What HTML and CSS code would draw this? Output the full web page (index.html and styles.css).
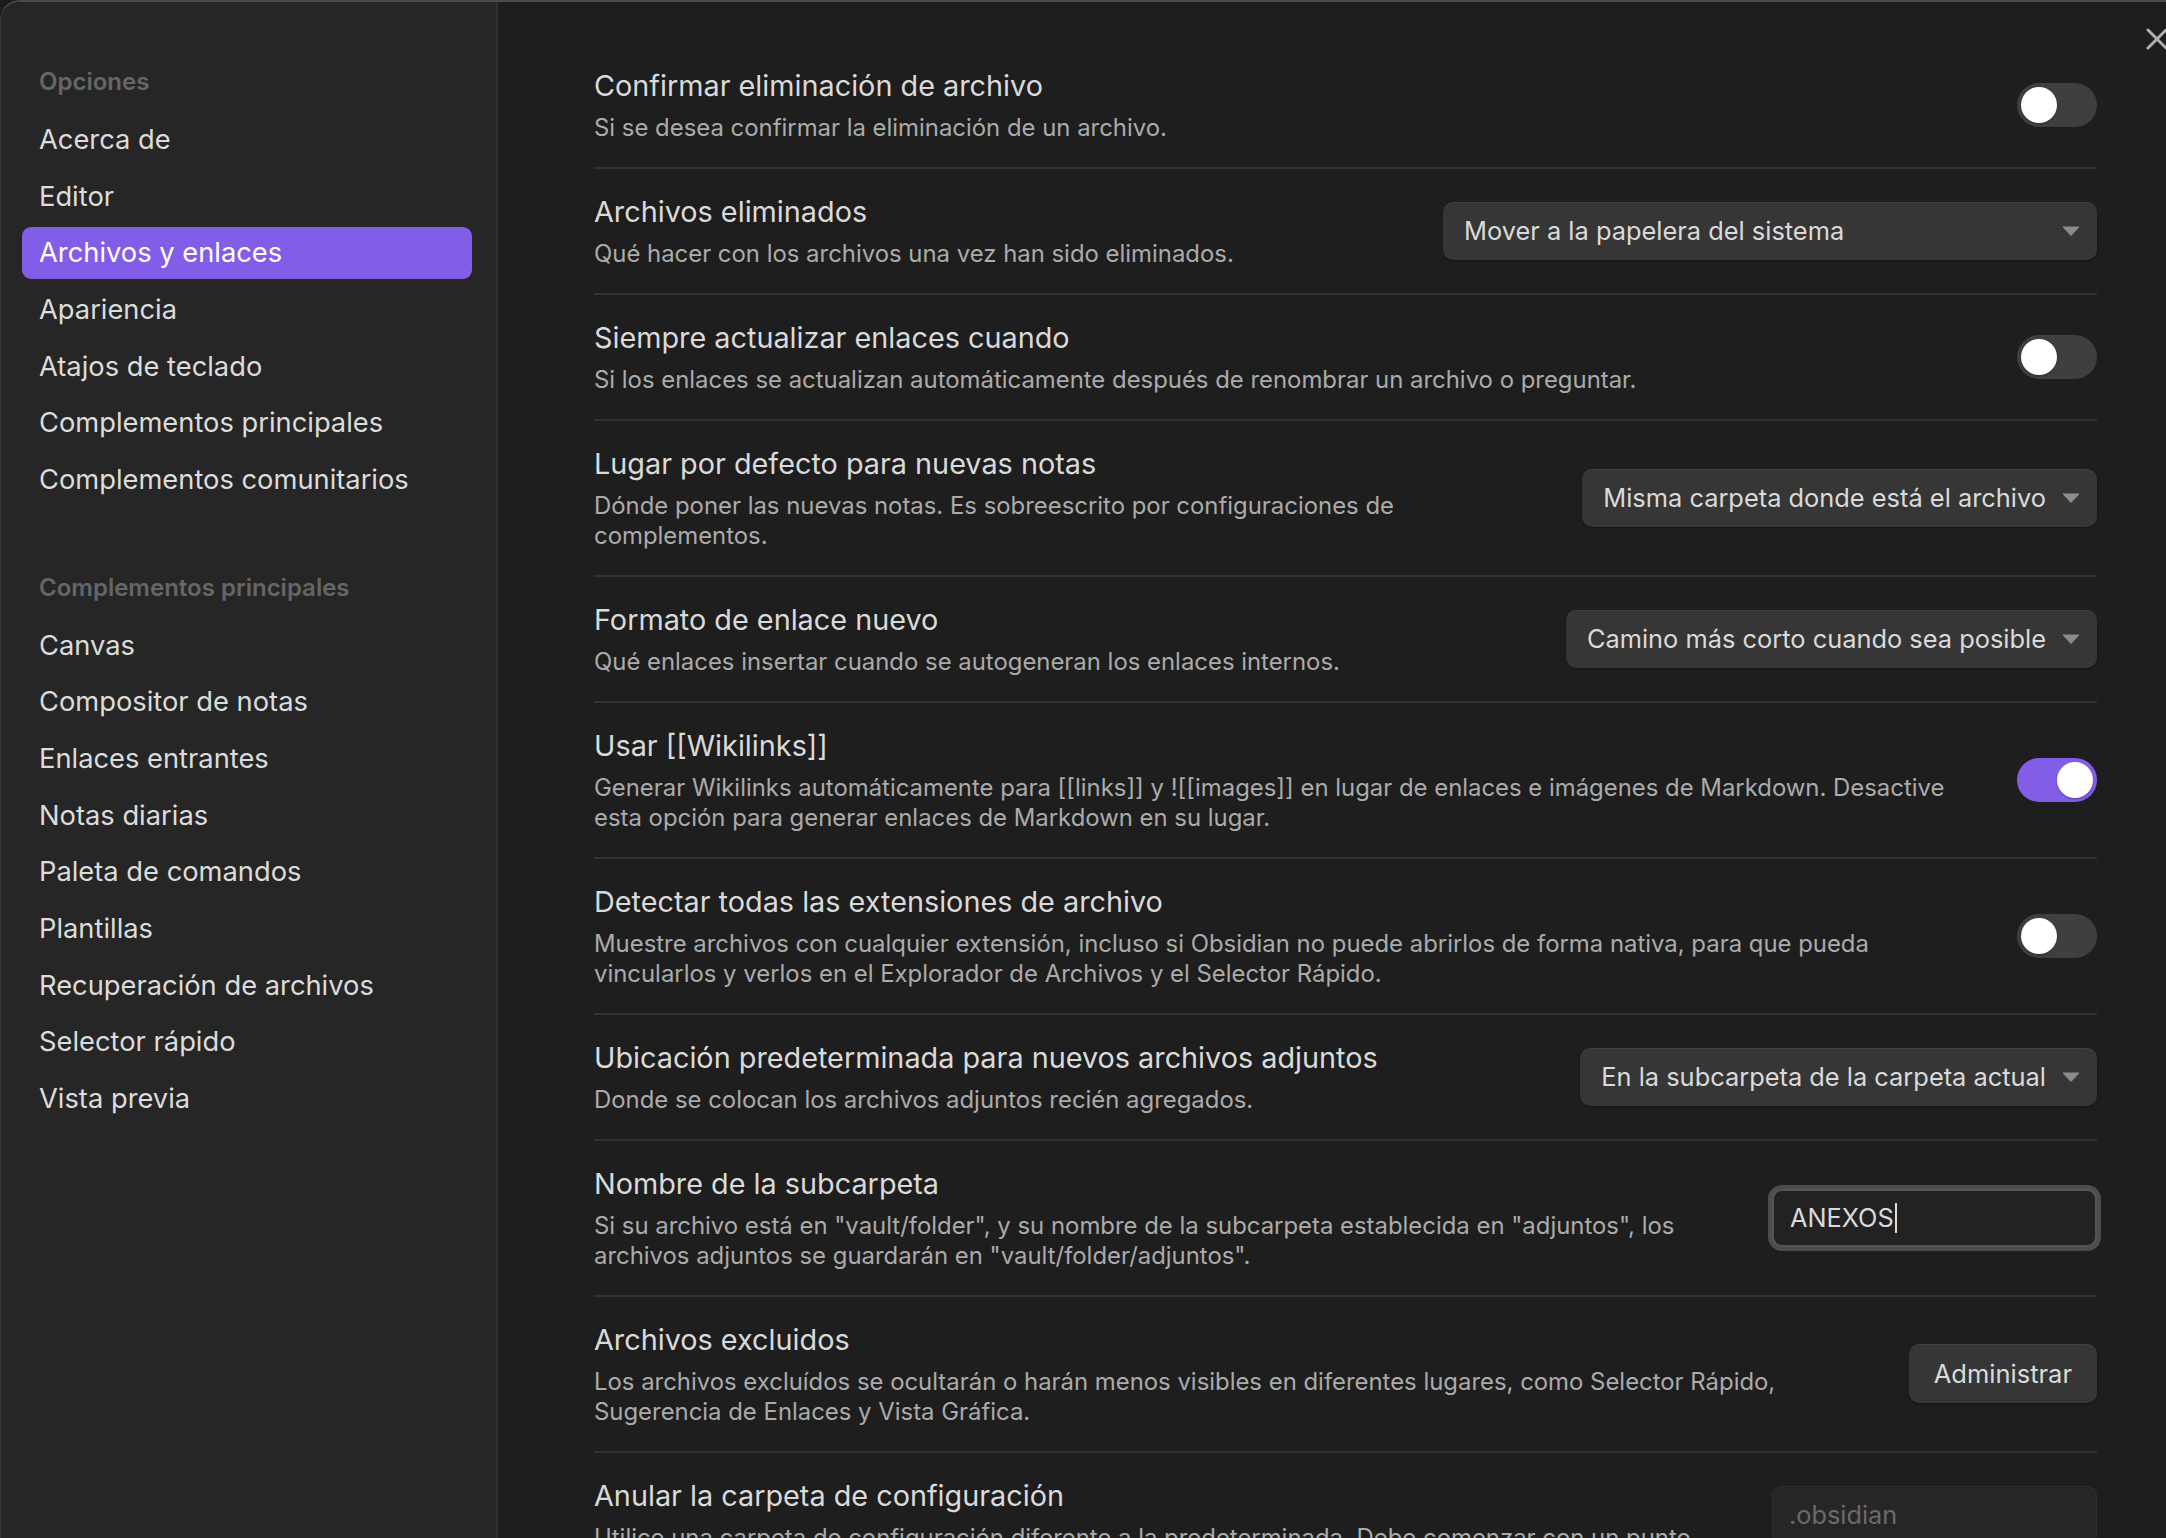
FILE: index.html
```html
<!DOCTYPE html>
<html lang="es">
<head>
<meta charset="utf-8">
<title>Opciones</title>
<link rel="stylesheet" href="styles.css">
</head>
<body>
<div class="modal">
  <button class="close" aria-label="Cerrar">
    <svg viewBox="0 0 22 22" width="22" height="22"><path d="M2 2 L20 20 M20 2 L2 20" stroke="#b0b0b0" stroke-width="3" stroke-linecap="round" fill="none"/></svg>
  </button>
  <nav class="sidebar">
    <div class="group">
      <div class="group-title">Opciones</div>
      <div class="nav-item">Acerca de</div>
      <div class="nav-item">Editor</div>
      <div class="nav-item is-active">Archivos y enlaces</div>
      <div class="nav-item">Apariencia</div>
      <div class="nav-item">Atajos de teclado</div>
      <div class="nav-item">Complementos principales</div>
      <div class="nav-item">Complementos comunitarios</div>
    </div>
    <div class="group">
      <div class="group-title">Complementos principales</div>
      <div class="nav-item">Canvas</div>
      <div class="nav-item">Compositor de notas</div>
      <div class="nav-item">Enlaces entrantes</div>
      <div class="nav-item">Notas diarias</div>
      <div class="nav-item">Paleta de comandos</div>
      <div class="nav-item">Plantillas</div>
      <div class="nav-item">Recuperación de archivos</div>
      <div class="nav-item">Selector rápido</div>
      <div class="nav-item">Vista previa</div>
    </div>
  </nav>
  <main class="content">
    <div class="setting">
      <div class="info">
        <div class="name">Confirmar eliminación de archivo</div>
        <div class="desc">Si se desea confirmar la eliminación de un archivo.</div>
      </div>
      <div class="control"><div class="toggle"><span class="knob"></span></div></div>
    </div>
    <div class="setting">
      <div class="info">
        <div class="name">Archivos eliminados</div>
        <div class="desc">Qué hacer con los archivos una vez han sido eliminados.</div>
      </div>
      <div class="control">
        <div class="dropdown dropdown--wide"><span>Mover a la papelera del sistema</span><svg class="arrow" viewBox="0 0 18 10" width="18" height="10"><path d="M1 1 H17 L9 9.5 Z" fill="#8c8c8c" stroke="#8c8c8c" stroke-width="1" stroke-linejoin="round"/></svg></div>
      </div>
    </div>
    <div class="setting">
      <div class="info">
        <div class="name">Siempre actualizar enlaces cuando</div>
        <div class="desc">Si los enlaces se actualizan automáticamente después de renombrar un archivo o preguntar.</div>
      </div>
      <div class="control"><div class="toggle"><span class="knob"></span></div></div>
    </div>
    <div class="setting">
      <div class="info">
        <div class="name">Lugar por defecto para nuevas notas</div>
        <div class="desc">Dónde poner las nuevas notas. Es sobreescrito por configuraciones de<br>complementos.</div>
      </div>
      <div class="control">
        <div class="dropdown"><span>Misma carpeta donde está el archivo</span><svg class="arrow" viewBox="0 0 18 10" width="18" height="10"><path d="M1 1 H17 L9 9.5 Z" fill="#8c8c8c" stroke="#8c8c8c" stroke-width="1" stroke-linejoin="round"/></svg></div>
      </div>
    </div>
    <div class="setting">
      <div class="info">
        <div class="name">Formato de enlace nuevo</div>
        <div class="desc">Qué enlaces insertar cuando se autogeneran los enlaces internos.</div>
      </div>
      <div class="control">
        <div class="dropdown"><span>Camino más corto cuando sea posible</span><svg class="arrow" viewBox="0 0 18 10" width="18" height="10"><path d="M1 1 H17 L9 9.5 Z" fill="#8c8c8c" stroke="#8c8c8c" stroke-width="1" stroke-linejoin="round"/></svg></div>
      </div>
    </div>
    <div class="setting">
      <div class="info">
        <div class="name">Usar [[Wikilinks]]</div>
        <div class="desc">Generar Wikilinks automáticamente para [[links]] y ![[images]] en lugar de enlaces e imágenes de Markdown. Desactive<br>esta opción para generar enlaces de Markdown en su lugar.</div>
      </div>
      <div class="control"><div class="toggle is-on"><span class="knob"></span></div></div>
    </div>
    <div class="setting">
      <div class="info">
        <div class="name">Detectar todas las extensiones de archivo</div>
        <div class="desc">Muestre archivos con cualquier extensión, incluso si Obsidian no puede abrirlos de forma nativa, para que pueda<br>vincularlos y verlos en el Explorador de Archivos y el Selector Rápido.</div>
      </div>
      <div class="control"><div class="toggle"><span class="knob"></span></div></div>
    </div>
    <div class="setting">
      <div class="info">
        <div class="name">Ubicación predeterminada para nuevos archivos adjuntos</div>
        <div class="desc">Donde se colocan los archivos adjuntos recién agregados.</div>
      </div>
      <div class="control">
        <div class="dropdown"><span>En la subcarpeta de la carpeta actual</span><svg class="arrow" viewBox="0 0 18 10" width="18" height="10"><path d="M1 1 H17 L9 9.5 Z" fill="#8c8c8c" stroke="#8c8c8c" stroke-width="1" stroke-linejoin="round"/></svg></div>
      </div>
    </div>
    <div class="setting">
      <div class="info">
        <div class="name">Nombre de la subcarpeta</div>
        <div class="desc">Si su archivo está en "vault/folder", y su nombre de la subcarpeta establecida en "adjuntos", los<br>archivos adjuntos se guardarán en "vault/folder/adjuntos".</div>
      </div>
      <div class="control">
        <div class="text-input is-focused"><span class="value">ANEXOS</span><span class="caret"></span></div>
      </div>
    </div>
    <div class="setting">
      <div class="info">
        <div class="name">Archivos excluidos</div>
        <div class="desc">Los archivos excluídos se ocultarán o harán menos visibles en diferentes lugares, como Selector Rápido,<br>Sugerencia de Enlaces y Vista Gráfica.</div>
      </div>
      <div class="control"><button class="btn">Administrar</button></div>
    </div>
    <div class="setting">
      <div class="info">
        <div class="name">Anular la carpeta de configuración</div>
        <div class="desc">Utilice una carpeta de configuración diferente a la predeterminada. Debe comenzar con un punto.</div>
      </div>
      <div class="control">
        <div class="text-input"><span class="placeholder">.obsidian</span></div>
      </div>
    </div>
  </main>
</div>
</body>
</html>
```
FILE: styles.css
```css
* { box-sizing: border-box; }

html, body {
  margin: 0;
  padding: 0;
  height: 100%;
  overflow: hidden;
  background: #1b1b1b;
  font-family: Inter, "Noto Sans", "Liberation Sans", sans-serif;
  -webkit-font-smoothing: antialiased;
}

.modal {
  position: relative;
  display: flex;
  width: 100vw;
  height: 100vh;
  background: #1e1e1e;
  border-top: 2px solid #4a4a4a;
  border-left: 1px solid #3a3a3a;
  border-top-left-radius: 20px;
  overflow: hidden;
}

.close {
  position: absolute;
  top: 26px;
  right: -2px;
  width: 22px;
  height: 22px;
  padding: 0;
  border: 0;
  background: none;
  display: block;
}
.close svg { display: block; }

/* Sidebar */
.sidebar {
  flex: 0 0 497px;
  background: #262626;
  border-right: 2px solid #303030;
  padding: 60px 24px 0 21px;
}

.group + .group { margin-top: 62px; }

.group-title {
  height: 40px;
  line-height: 40px;
  padding-left: 17px;
  margin-bottom: 12px;
  font-size: 24px;
  font-weight: 600;
  color: #666666;
}

.nav-item {
  height: 51.5px;
  line-height: 51.5px;
  padding-left: 17px;
  margin-bottom: 5.2px;
  border-radius: 9px;
  font-size: 27.3px;
  color: #dcdcdc;
  white-space: nowrap;
}

.nav-item.is-active {
  background: #825de8;
  color: #ffffff;
}

/* Content */
.content {
  flex: 1 1 auto;
  padding: 40px 69px 0 96px;
  overflow: hidden;
}

.setting {
  display: flex;
  align-items: center;
  padding: 23px 0 24px;
  border-top: 2px solid #313131;
}
.setting:first-child { border-top: 0; padding-top: 24px; }

.info {
  flex: 1 1 auto;
  min-width: 0;
  margin-right: 30px;
}

.name {
  font-size: 28.8px;
  line-height: 40px;
  color: #dadada;
}

.desc {
  margin-top: 7px;
  font-size: 23.9px;
  line-height: 30px;
  color: #ababab;
}

.control {
  flex: 0 0 auto;
  display: flex;
  align-items: center;
}

/* Toggle */
.toggle {
  width: 80px;
  height: 44px;
  border-radius: 22px;
  background: #3f3f3f;
  padding: 4px;
  display: flex;
  justify-content: flex-start;
}
.toggle .knob {
  width: 36px;
  height: 36px;
  border-radius: 50%;
  background: #ffffff;
  box-shadow: 0 1px 2px rgba(0,0,0,0.3);
}
.toggle.is-on {
  background: #825de8;
  justify-content: flex-end;
}

/* Dropdown */
.dropdown {
  height: 58px;
  display: flex;
  align-items: center;
  justify-content: space-between;
  padding: 0 17px 0 21px;
  background: #363636;
  border-radius: 10px;
  box-shadow: 0 1px 2px rgba(0,0,0,0.35), inset 0 1px 0 rgba(255,255,255,0.05);
  font-size: 25.4px;
  color: #dadada;
  white-space: nowrap;
}
.dropdown--wide { width: 654px; }
.dropdown .arrow { margin-left: 16px; flex: 0 0 auto; }

/* Button */
.btn {
  height: 59px;
  padding: 0 25px;
  border: 0;
  border-radius: 10px;
  background: #363636;
  box-shadow: 0 1px 2px rgba(0,0,0,0.35), inset 0 1px 0 rgba(255,255,255,0.05);
  font-family: inherit;
  font-size: 25.5px;
  color: #dadada;
}

/* Text input */
.text-input {
  width: 325px;
  height: 58px;
  display: flex;
  align-items: center;
  padding-left: 16px;
  border-radius: 10px;
  background: #262626;
  border: 1px solid #303030;
  font-size: 25.3px;
  color: #dadada;
}
.text-input.is-focused {
  border: 2px solid #555555;
  box-shadow: 0 0 0 4px #4d4d4d;
  background: #222222;
}
.text-input .caret {
  display: inline-block;
  width: 2px;
  height: 30px;
  margin-left: 1px;
  background: #dddddd;
}
.text-input .placeholder { color: #6a6a6a; }
```
